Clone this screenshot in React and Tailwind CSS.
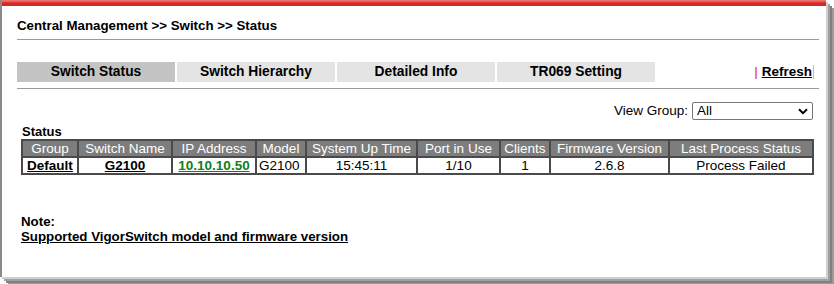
import React from "react";

const tabs = [
  { label: "Switch Status", active: true },
  { label: "Switch Hierarchy" },
  { label: "Detailed Info" },
  { label: "TR069 Setting" },
];

const columns = [
  { label: "Group", w: "w-[54px]" },
  { label: "Switch Name", w: "w-[92px]" },
  { label: "IP Address", w: "w-[82px]" },
  { label: "Model", w: "w-[48px]" },
  { label: "System Up Time", w: "w-[109px]" },
  { label: "Port in Use", w: "w-[81px]" },
  { label: "Clients", w: "w-[48px]" },
  { label: "Firmware Version", w: "w-[117px]" },
  { label: "Last Process Status", w: "w-[142px]" },
];

const App = () => {
  return (
    <div className="w-[834px] h-[284px] bg-white overflow-hidden font-['Liberation_Sans',Arial,sans-serif] text-black">
      <div className="w-[826px] h-[277px] border-l-2 border-[#8a8a8a] bg-white shadow-[2px_2px_0_#d0d0d0,4px_4px_0_#a0a0a0,6px_6px_0_#808080,8px_8px_0_#9a9a9a]">
        {/* red top bar */}
        <div className="h-[6px] bg-gradient-to-b from-[#f08080] via-[#e02020] to-[#c83030]" />

        <div className="pl-[15px] pr-[7px]">
          <div className="pt-[12px] h-[33px] text-[13.3px] font-bold leading-[15px]">
            Central Management &gt;&gt; Switch &gt;&gt; Status
          </div>
          <div className="h-[1px] bg-[#9a9a9a]" />

          {/* tabs */}
          <div className="mt-[22px] flex items-center h-[20px]">
            {tabs.map((t) => (
              <div
                key={t.label}
                className={`w-[158px] h-[20px] mr-[2px] flex items-center justify-center text-[13.8px] font-bold ${
                  t.active ? "bg-[#c4c4c4]" : "bg-[#e4e4e4]"
                }`}
              >
                {t.label}
              </div>
            ))}
            <div className="ml-auto mr-[5px] text-[13.5px] flex items-center">
              <span className="text-[#e02050] mr-[4px] font-normal">|</span>
              <span className="font-bold underline">Refresh</span>
              <span className="w-[1px] h-[14px] bg-[#f0a0c0] ml-[1px]" />
            </div>
          </div>
          <div className="mt-[6px] h-[1px] bg-[#9a9a9a]" />

          {/* view group */}
          <div className="mt-[12px] flex justify-end items-center mr-[6px]">
            <span className="text-[13.5px] mr-[4px]">View Group:</span>
            <div className="w-[121px] h-[18px] border border-[#767676] rounded-[2px] flex items-center justify-between pl-[4px] pr-[4px] text-[13.5px]">
              <span>All</span>
              <svg width="10" height="7" viewBox="0 0 10 7">
                <path d="M1 1.2 L5 5.2 L9 1.2" fill="none" stroke="#000" strokeWidth="2" />
              </svg>
            </div>
          </div>

          {/* status table */}
          <div className="mt-[3px] ml-[5px] text-[13px] font-bold leading-[15px]">Status</div>
          <table className="ml-[4px] w-[793px] table-fixed border-separate border-spacing-[2px] bg-[#4a4a4a] text-[13.5px] leading-[15px]">
            <thead>
              <tr>
                {columns.map((c) => (
                  <th
                    key={c.label}
                    className={`${c.w} bg-[#7d7d7d] text-white font-normal h-[15px] p-0 text-center whitespace-nowrap overflow-hidden`}
                  >
                    {c.label}
                  </th>
                ))}
              </tr>
            </thead>
            <tbody>
              <tr className="bg-white">
                <td className="p-0 h-[15px] text-center font-bold underline">Default</td>
                <td className="p-0 text-center font-bold underline">G2100</td>
                <td className="p-0 text-center font-bold underline text-[#11801a]">10.10.10.50</td>
                <td className="p-0 text-left pl-[2px]">G2100</td>
                <td className="p-0 text-center">15:45:11</td>
                <td className="p-0 text-center">1/10</td>
                <td className="p-0 text-center text-black">1</td>
                <td className="p-0 text-center">2.6.8</td>
                <td className="p-0 text-center">Process Failed</td>
              </tr>
            </tbody>
          </table>

          {/* note */}
          <div className="mt-[39px] ml-[4px] text-[13.3px] font-bold leading-[15px]">
            <div>Note:</div>
            <div className="underline">Supported VigorSwitch model and firmware version</div>
          </div>
        </div>
      </div>
    </div>
  );
};

export default App;
